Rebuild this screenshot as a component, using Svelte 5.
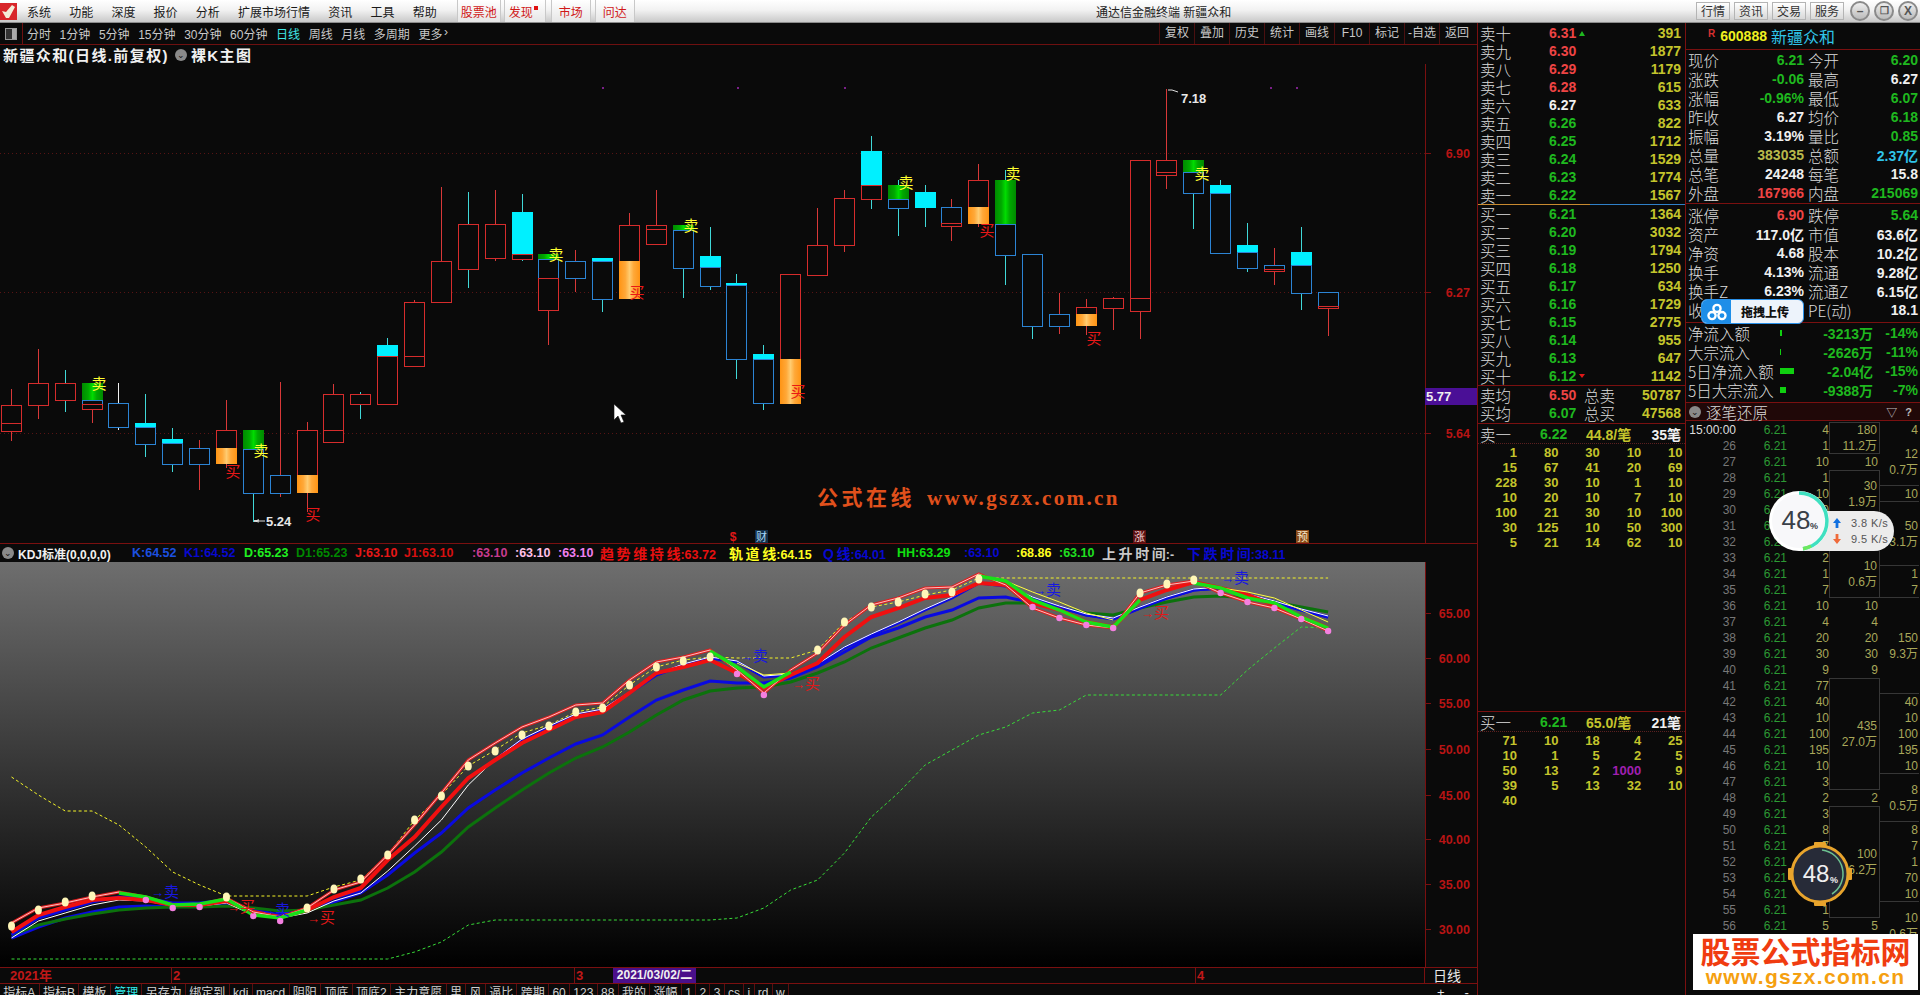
<script>
  const menus = ["系统", "功能", "深度", "报价", "分析", "扩展市场行情", "资讯", "工具", "帮助"];
  const periods = ["分时", "1分钟", "5分钟", "15分钟", "30分钟", "60分钟", "日线", "周线", "月线", "多周期", "更多"];
  const tools = ["复权", "叠加", "历史", "统计", "画线", "F10", "标记", "-自选", "返回"];

  // [wick top, wick bottom, wick colour, body segments [top, bottom, kind]]
  const candles = [
    [389, 441, "r", [[405, 423, "r"], [423, 431, "r"]]],
    [349, 419, "r", [[383, 405, "r"]]],
    [370, 412, "c", [[383, 400, "r"]]],
    [383, 423, "r", [[383, 400, "g"], [400, 404, "b"], [404, 409, "r"]]],
    [383, 430, "w", [[403, 427, "b"]]],
    [394, 457, "c", [[423, 427, "C"], [427, 444, "b"]]],
    [428, 472, "c", [[439, 443, "C"], [443, 464, "b"]]],
    [440, 490, "r", [[448, 464, "b"]]],
    [400, 468, "r", [[430, 448, "r"], [448, 464, "o"]]],
    [430, 522, "c", [[430, 449, "g"], [449, 493, "b"]]],
    [382, 497, "r", [[475, 493, "b"]]],
    [422, 512, "r", [[430, 475, "r"], [475, 493, "o"]]],
    [384, 443, "r", [[394, 430, "r"], [430, 442, "r"]]],
    [392, 419, "c", [[394, 404, "r"]]],
    [338, 404, "c", [[345, 356, "C"], [356, 404, "r"]]],
    [300, 366, "r", [[302, 356, "r"], [356, 366, "r"]]],
    [187, 302, "r", [[261, 302, "r"]]],
    [192, 288, "c", [[224, 269, "r"]]],
    [190, 261, "r", [[224, 258, "r"]]],
    [194, 261, "c", [[212, 254, "C"], [254, 259, "r"]]],
    [254, 345, "r", [[254, 259, "g"], [259, 278, "b"], [278, 310, "r"]]],
    [250, 292, "r", [[261, 278, "b"]]],
    [258, 312, "c", [[258, 261, "C"], [261, 299, "b"]]],
    [213, 299, "r", [[225, 261, "r"], [261, 299, "o"]]],
    [190, 245, "r", [[225, 229, "r"], [229, 244, "r"]]],
    [225, 298, "c", [[225, 230, "g"], [230, 268, "b"]]],
    [227, 290, "c", [[256, 267, "C"], [267, 286, "b"]]],
    [274, 379, "c", [[283, 285, "C"], [285, 359, "b"]]],
    [345, 410, "c", [[354, 359, "C"], [359, 403, "b"]]],
    [274, 404, "r", [[274, 359, "r"], [359, 404, "o"]]],
    [208, 275, "r", [[245, 275, "r"]]],
    [190, 252, "r", [[198, 245, "r"]]],
    [136, 209, "c", [[151, 185, "C"], [185, 199, "r"]]],
    [180, 236, "c", [[185, 199, "g"], [199, 208, "b"]]],
    [185, 227, "c", [[192, 208, "C"]]],
    [199, 241, "r", [[207, 223, "b"], [223, 226, "r"]]],
    [164, 227, "r", [[180, 207, "r"], [207, 224, "o"]]],
    [170, 285, "c", [[180, 224, "g"], [224, 255, "b"]]],
    [254, 339, "c", [[254, 326, "b"]]],
    [293, 334, "r", [[314, 326, "b"]]],
    [299, 335, "r", [[307, 314, "r"], [314, 326, "o"]]],
    [297, 330, "r", [[298, 308, "r"]]],
    [160, 339, "r", [[160, 298, "r"], [298, 311, "r"]]],
    [89, 189, "r", [[160, 172, "r"], [172, 175, "r"]]],
    [160, 229, "c", [[160, 172, "g"], [172, 193, "b"]]],
    [180, 253, "c", [[185, 193, "C"], [193, 253, "b"]]],
    [223, 272, "c", [[245, 252, "C"], [252, 268, "b"]]],
    [248, 285, "r", [[265, 269, "b"], [269, 271, "r"]]],
    [227, 310, "c", [[252, 265, "C"], [265, 293, "b"]]],
    [292, 336, "r", [[292, 306, "b"], [306, 308, "r"]]]
  ];
  const barX = (i) => Math.round(1 + 26.87 * i);
  const midX = (i) => 11.5 + 26.87 * i;
  const wickColor = { r: "#d83838", c: "#40d8d8", w: "#f0f0f0" };
  const strokeColor = { r: "#d62c2c", b: "#2c84d4" };

  const sellMarks = [[99, 383], [261, 450], [556, 254], [691, 225], [906, 182], [1013, 173], [1202, 173]];
  const buyMarks = [[233, 471], [313, 514], [637, 292], [798, 391], [987, 230], [1094, 338]];
  const purpleDots = [602, 737, 844, 1270, 1296];

  const darkGreen = [935, 925, 919, 914, 910, 908, 907, 907, 906, 908, 911, 910, 905, 900, 888, 872, 852, 827, 808, 790, 773, 758, 747, 732, 715, 700, 691, 688, 687, 682, 673, 662, 648, 638, 628, 620, 608, 603, 603, 608, 613, 615, 608, 602, 597, 596, 598, 602, 607, 612];
  const blueLow = [938, 927, 918, 912, 907, 906, 907, 905, 903, 910, 915, 910, 902, 893, 875, 853, 833, 808, 790, 773, 758, 744, 735, 717, 700, 690, 681, 683, 683, 678, 667, 652, 637, 628, 617, 610, 598, 597, 603, 607, 615, 619, 608, 598, 590, 588, 595, 602, 610, 617];
  const blueHigh = [935, 918, 910, 902, 897, 898, 903, 903, 900, 912, 915, 910, 898, 890, 868, 843, 817, 782, 760, 740, 727, 715, 710, 693, 675, 665, 658, 662, 677, 675, 665, 648, 635, 623, 610, 598, 583, 586, 598, 607, 615, 619, 608, 598, 590, 588, 595, 602, 610, 617];
  const redMain = [932, 915, 907, 900, 898, 900, 905, 905, 901, 912, 917, 910, 897, 888, 860, 837, 807, 778, 760, 743, 730, 717, 712, 693, 673, 667, 660, 673, 688, 675, 663, 637, 617, 608, 598, 595, 583, 585, 603, 610, 622, 627, 600, 590, 582, 588, 595, 605, 617, 628];
  const paleHigh = [923, 908, 903, 897, 892, 897, 905, 905, 898, 912, 917, 908, 890, 882, 855, 825, 793, 760, 743, 727, 717, 705, 703, 680, 662, 657, 650, 670, 693, 670, 653, 625, 605, 598, 588, 587, 574, 585, 608, 618, 625, 628, 593, 585, 581, 593, 602, 608, 619, 631];
  const yellowDash = [777, 795, 811, 811, 825, 847, 872, 885, 896, 896, 896, 896, 887, 880, 855, 820, 795, 766, 750, 733, 725, 712, 707, 685, 667, 660, 657, 658, 658, 658, 650, 622, 607, 602, 595, 590, 578, 578, 578, 578, 578, 578, 578, 578, 578, 578, 578, 578, 578, 578];
  const greenDash = [959, 959, 959, 959, 959, 959, 959, 959, 959, 959, 959, 959, 959, 959, 959, 952, 942, 925, 920, 920, 920, 920, 920, 920, 920, 920, 920, 918, 908, 890, 880, 853, 817, 793, 765, 750, 735, 727, 713, 710, 695, 695, 695, 695, 695, 695, 670, 648, 627, 628];
  const whiteLine = blueHigh.map((y, i) => (i <= 17 ? y + 3 : y - 1));
  const poly = (arr, from = 0, to = arr.length - 1) =>
    arr.slice(from, to + 1).map((y, k) => `${midX(from + k).toFixed(1)},${y}`).join(" ");

  // bright green overlay on the falling stretches: [first bar, values]
  const greenRuns = [
    [4, [893, 897, 905, 904, 899, 915, 918, 910]],
    [26, [651, 667, 687, 672]],
    [36, [576, 581, 600, 610, 622, 627, 600]],
    [44, [583, 588, 598, 603, 617, 628]]
  ];
  const yellowRuns = [
    [27, [663, 675, 673]],
    [37, [581, 592, 602, 613, 620]],
    [44, [583, 588, 592, 598, 610, 622]]
  ];
  const polyRun = (run) => run[1].map((y, k) => `${midX(run[0] + k).toFixed(1)},${y}`).join(" ");

  const creamDots = [[0, 926], [1, 910], [2, 902], [3, 896], [8, 897], [11, 908], [12, 889], [13, 879], [14, 855], [15, 820], [16, 796], [17, 766], [18, 751], [19, 735], [20, 726], [21, 712], [22, 708], [23, 685], [24, 667], [25, 661], [26, 657], [30, 650], [31, 622], [32, 607], [33, 602], [34, 594], [35, 592], [36, 579], [42, 593], [43, 584], [44, 580]];
  const pinkDots = [[5, 900], [6, 908], [7, 907], [9, 916], [10, 921], [27, 674], [28, 695], [38, 607], [39, 618], [40, 625], [41, 628], [45, 593], [46, 602], [47, 608], [48, 619], [49, 631]];
  const kdjArrows = [
    ["卖", 151, 892, "#1818e0"], ["卖", 262, 910, "#1818e0"], ["买", 227, 907, "#e01818"], ["买", 307, 918, "#e01818"],
    ["卖", 740, 656, "#1818e0"], ["买", 792, 684, "#e01818"], ["卖", 1033, 590, "#1818e0"], ["买", 1141, 613, "#e01818"], ["卖", 1221, 578, "#1818e0"]
  ];
  const kdjAxis = [["65.00", 613], ["60.00", 658], ["55.00", 703], ["50.00", 749], ["45.00", 795], ["40.00", 839], ["35.00", 884], ["30.00", 929]];

  // [label, value, colour, width]
  const kdjHead = [
    ["K", ":64.52", "#1c50e0", 52], ["K1", ":64.52", "#0808d0", 60], ["D", ":65.23", "#20f020", 52], ["D1", ":65.23", "#008800", 59], ["J", ":63.10", "#e81818", 49], ["J1", ":63.10", "#d81010", 68],
    ["", ":63.10", "#c83c90", 43], ["", ":63.10", "#ffc0e8", 43], ["", ":63.10", "#f080f0", 42], ["趋势维持线", ":63.72", "#e81010", 129], ["轨道线", ":64.15", "#ffff20", 94],
    ["Q线", ":64.01", "#0808d0", 74], ["HH", ":63.29", "#10e010", 67], ["", ":63.10", "#0808d0", 52], ["", ":68.86", "#ffff20", 43], ["", ":63.10", "#20e020", 43],
    ["上升时间", ":-", "#c8c8c8", 85], ["下跌时间", ":38.11", "#0808d0", 110]
  ];
  const hasCjk = (s) => /[^\x00-\x7f]/.test(s);

  const bottomTabs = ["指标A", "指标B", "模板", "管理", "另存为", "绑定到", "kdj", "macd", "阴阳", "顶底", "顶底2", "主力意愿", "里", "风", "逼比", "跨期", "60", "123", "88", "我的", "涨幅", "1", "2", "3", "cs", "i", "rd", "w"];

  const sellBook = [["卖十", "6.31", "391"], ["卖九", "6.30", "1877"], ["卖八", "6.29", "1179"], ["卖七", "6.28", "615"], ["卖六", "6.27", "633"], ["卖五", "6.26", "822"], ["卖四", "6.25", "1712"], ["卖三", "6.24", "1529"], ["卖二", "6.23", "1774"], ["卖一", "6.22", "1567"]];
  const buyBook = [["买一", "6.21", "1364"], ["买二", "6.20", "3032"], ["买三", "6.19", "1794"], ["买四", "6.18", "1250"], ["买五", "6.17", "634"], ["买六", "6.16", "1729"], ["买七", "6.15", "2775"], ["买八", "6.14", "955"], ["买九", "6.13", "647"], ["买十", "6.12", "1142"]];
  const priceClass = (p) => (p > 6.27 ? "red" : p < 6.27 ? "green" : "white");

  const sellQueue = [1, 80, 30, 10, 10, 15, 67, 41, 20, 69, 228, 30, 10, 1, 10, 10, 20, 10, 7, 10, 100, 21, 30, 10, 100, 30, 125, 10, 50, 300, 5, 21, 14, 62, 10];
  const buyQueue = [71, 10, 18, 4, 25, 10, 1, 5, 2, 5, 50, 13, 2, 1000, 9, 39, 5, 13, 32, 10, 40];

  const quoteA = [
    ["现价", "6.21", "green", "今开", "6.20", "green"], ["涨跌", "-0.06", "green", "最高", "6.27", "white"], ["涨幅", "-0.96%", "green", "最低", "6.07", "green"], ["昨收", "6.27", "white", "均价", "6.18", "green"],
    ["振幅", "3.19%", "white", "量比", "0.85", "green"], ["总量", "383035", "dimyellow", "总额", "2.37亿", "cyan"], ["总笔", "24248", "white", "每笔", "15.8", "white"], ["外盘", "167966", "red", "内盘", "215069", "green"]
  ];
  const quoteB = [
    ["涨停", "6.90", "red", "跌停", "5.64", "green"], ["资产", "117.0亿", "white", "市值", "63.6亿", "white"], ["净资", "4.68", "white", "股本", "10.2亿", "white"], ["换手", "4.13%", "white", "流通", "9.28亿", "white"],
    ["换手Z", "6.23%", "white", "流通Z", "6.15亿", "white"], ["收益", "0.09", "white", "PE(动)", "18.1", "white"]
  ];
  const flows = [["净流入额", 2, "-3213万", "-14%"], ["大宗流入", 1, "-2626万", "-11%"], ["5日净流入额", 14, "-2.04亿", "-15%"], ["5日大宗流入", 6, "-9388万", "-7%"]];

  const tickVols = [4, 1, 10, 1, 10, 20, 50, 10, 2, 1, 7, 10, 4, 20, 30, 9, 77, 40, 10, 100, 195, 10, 3, 2, 3, 8, 7, 1, 70, 10, 1, 5];
  // merged cells of the two right tick columns: [first row, rows, line 1, line 2]
  const tickC3 = [[0, 2, "180", "11.2万", 1], [2, 1, "10"], [3, 3, "30", "1.9万", 1], [8, 3, "10", "0.6万", 1], [11, 1, "10"], [12, 1, "4"], [13, 1, "20"], [14, 1, "30"], [15, 1, "9"], [16, 7, "435", "27.0万", 1], [23, 1, "2"], [24, 7, "100", "6.2万", 1], [31, 1, "5"]];
  const tickC4 = [[0, 1, "4"], [1, 3, "12", "0.7万", 1], [4, 1, "10", "", 1], [5, 4, "50", "3.1万", 1], [9, 1, "1"], [10, 1, "7", "", 1], [11, 6, "150", "9.3万", 1], [17, 1, "40"], [18, 1, "10"], [19, 1, "100"], [20, 1, "195"], [21, 1, "10", "", 1], [22, 3, "8", "0.5万", 1], [25, 1, "8"], [26, 1, "7"], [27, 1, "1"], [28, 1, "70"], [29, 1, "10", "", 1], [30, 3, "10", "0.6万"]];
</script>

<div class="screen">
  <header class="titlebar">
    <div class="bar-left">
      <svg class="logo" viewBox="0 0 17 17">
        <rect width="17" height="17" fill="#d8262a" />
        <polygon points="2,8 6,9 12,2 15,4 9,15 6,15" fill="#f4ecd8" />
      </svg>
      <nav class="menu">
        {#each menus as m}<span>{m}</span>{/each}
      </nav>
      <span class="hot first">股票池</span>
      <span class="hot dot">发现<i></i></span>
      <span class="hot">市场</span>
      <span class="hot last">问达</span>
    </div>
    <div class="win-title">通达信金融终端 新疆众和</div>
    <div class="win-btns">
      <span class="win-tab">行情</span><span class="win-tab">资讯</span><span class="win-tab">交易</span><span class="win-tab">服务</span>
      <span class="win-circle">–</span><span class="win-circle small">❐</span><span class="win-circle">X</span>
    </div>
  </header>

  <div class="main">
    <section class="charts">
      <div class="toolbar">
        <span class="panel-ico"><i></i></span>
        <div class="periods">
          {#each periods as p}<span class:on={p === "日线"}>{p}</span>{/each}
          <span class="chev">›</span>
        </div>
        <div class="tools">
          {#each tools as t}<span>{t}</span>{/each}
        </div>
      </div>

      <div class="chart-title">
        <b>新疆众和(日线.前复权)</b>
        <span class="round-ico">⌄</span>
        <b>裸K主图</b>
      </div>

      <svg class="price" viewBox="0 64 1477 479" width="1477" height="479">
        <defs>
          <linearGradient id="gr">
            <stop offset="0" stop-color="#008a00" /><stop offset="0.3" stop-color="#00a800" /><stop offset="0.5" stop-color="#00dc00" /><stop offset="0.7" stop-color="#00a800" /><stop offset="1" stop-color="#008a00" />
          </linearGradient>
          <linearGradient id="or">
            <stop offset="0" stop-color="#ff9414" /><stop offset="0.3" stop-color="#ffa838" /><stop offset="0.5" stop-color="#ffcb70" /><stop offset="0.7" stop-color="#ffa838" /><stop offset="1" stop-color="#ff9414" />
          </linearGradient>
        </defs>

        {#each [153, 292, 433] as y}
          <line x1="0" x2="1432" y1={y + 0.5} y2={y + 0.5} stroke="#571414" stroke-dasharray="1 3" />
        {/each}
        {#each purpleDots as x}<rect x={x} y="87" width="2" height="2" fill="#7a2088" />{/each}

        <g shape-rendering="crispEdges">
          {#each candles as c, i}
            <line x1={barX(i) + 10.5} x2={barX(i) + 10.5} y1={c[0]} y2={c[1]} stroke={wickColor[c[2]]} />
            {#each c[3] as s}
              {#if s[2] === "C"}
                <rect x={barX(i)} y={s[0]} width="21" height={s[1] - s[0]} fill="#00f0ff" />
              {:else if s[2] === "g"}
                <rect x={barX(i)} y={s[0]} width="21" height={s[1] - s[0]} fill="url(#gr)" />
              {:else if s[2] === "o"}
                <rect x={barX(i)} y={s[0]} width="21" height={s[1] - s[0]} fill="url(#or)" />
              {:else}
                <rect x={barX(i) + 0.5} y={s[0] + 0.5} width="20" height={s[1] - s[0]} fill="#0a0a0a" stroke={strokeColor[s[2]]} />
              {/if}
            {/each}
          {/each}
        </g>

        {#each sellMarks as m}<text class="mark" x={m[0]} y={m[1] + 6} fill="#ffff30" text-anchor="middle">卖</text>{/each}
        {#each buyMarks as m}<text class="mark" x={m[0]} y={m[1] + 6} fill="#e81818" text-anchor="middle">买</text>{/each}

        <polyline points="1168,90 1172,90 1178,92" fill="none" stroke="#ddd" />
        <text class="extreme" x="1181" y="103">7.18</text>
        <polyline points="259,522 254,521 259,520 254,521 265,521" fill="none" stroke="#ddd" />
        <text class="extreme" x="266" y="526">5.24</text>

        <text class="site" x="817" y="505">公式在线</text>
        <text class="site wide" x="927" y="505">www.gszx.com.cn</text>

        <text class="event bold" x="733" y="541" fill="#e01818" text-anchor="middle">$</text>
        <rect x="755" y="530" width="13" height="13" fill="#12304a" /><text class="event" x="761.5" y="541" fill="#a8d8f8" text-anchor="middle">财</text>
        <rect x="1133" y="530" width="13" height="13" fill="#5a1010" /><text class="event" x="1139.5" y="541" fill="#f0d0d0" text-anchor="middle">涨</text>
        <rect x="1296" y="530" width="13" height="13" fill="#8a4a18" /><text class="event" x="1302.5" y="541" fill="#f8e8c8" text-anchor="middle">预</text>

        <polygon points="614,404 614,420 618,416 621,423 624,422 621,415 626,415" fill="#fff" stroke="#111" stroke-width="0.6" />

        <polygon points="1395,51 1399,55 1395,59 1391,55" fill="none" stroke="#777" />
        <rect x="1411.5" y="50.5" width="8" height="9" fill="#222" stroke="#888" /><rect x="1415" y="52" width="3" height="6" fill="#aaa" />

        <line x1="1425.5" x2="1425.5" y1="64" y2="543" stroke="#7a1010" />
        {#each [["6.90", 153], ["6.27", 292], ["5.64", 433]] as a}
          <line x1="1425" x2="1431" y1={a[1] + 0.5} y2={a[1] + 0.5} stroke="#7a1010" />
          <text class="axis" x="1470" y={a[1] + 5} text-anchor="end">{a[0]}</text>
        {/each}
        <rect x="1425" y="388" width="52" height="17" fill="#4a0f96" />
        <text class="axis-now" x="1426" y="401">5.77</text>
      </svg>

      <div class="kdj-head">
        <span class="round-ico">⌄</span>
        <b class="kdj-name">KDJ标准(0,0,0,0)</b>
        {#each kdjHead as h}
          <b class="kdj-val" style="color:{h[2]};width:{h[3]}px"><span class:kdj-cn={hasCjk(h[0])}>{h[0]}</span>{h[1]}</b>
        {/each}
      </div>

      <svg class="kdj" viewBox="0 562 1477 405" width="1477" height="405">
        <defs>
          <linearGradient id="fade" x1="0" x2="0" y1="0" y2="1">
            <stop offset="0" stop-color="#6e6e6e" /><stop offset="1" stop-color="#000" />
          </linearGradient>
        </defs>
        <rect x="0" y="562" width="1425" height="405" fill="url(#fade)" />
        <polyline points={poly(yellowDash)} fill="none" stroke="#f4f428" stroke-dasharray="3 2.5" />
        <polyline points={poly(greenDash)} fill="none" stroke="#38dc38" stroke-dasharray="3 2.5" />
        <polyline points={poly(blueLow)} fill="none" stroke="#0a0ae0" stroke-width="3" />
        <polyline points={poly(darkGreen)} fill="none" stroke="#0c720c" stroke-width="3" />
        <polyline points={poly(blueHigh, 0, 13)} fill="none" stroke="#0a0ae0" stroke-width="3" />
        <polyline points={poly(blueHigh, 18, 49)} fill="none" stroke="#0a0ae0" stroke-width="3" />
        <polyline points={poly(whiteLine)} fill="none" stroke="#fff" />
        <polyline points={poly(redMain)} fill="none" stroke="#f01010" stroke-width="4" />
        <polyline points={poly(paleHigh)} fill="none" stroke="#e02020" stroke-width="3" />
        <polyline points={poly(paleHigh)} fill="none" stroke="#ffc0c0" />
        {#each yellowRuns as run}
          <polyline points={polyRun(run)} fill="none" stroke="#ffff40" />
        {/each}
        {#each greenRuns as run}
          <polyline points={polyRun(run)} fill="none" stroke="#18e018" stroke-width="3.5" />
        {/each}
        {#each creamDots as d}<ellipse cx={midX(d[0])} cy={d[1]} rx="3.5" ry="4.5" fill="#fff6b8" />{/each}
        {#each pinkDots as d}<circle cx={midX(d[0])} cy={d[1]} r="3.2" fill="#f480e0" />{/each}
        {#each kdjArrows as a}
          <text class="arrow" x={a[1]} y={a[2] + 5} fill={a[3]}>→<tspan class="arrow-cjk">{a[0]}</tspan></text>
        {/each}
        <line x1="1425.5" x2="1425.5" y1="562" y2="967" stroke="#7a1010" />
        {#each kdjAxis as a}
          <line x1="1425" x2="1431" y1={a[1] + 0.5} y2={a[1] + 0.5} stroke="#7a1010" />
          <text class="axis" x="1470" y={a[1] + 5} text-anchor="end">{a[0]}</text>
        {/each}
      </svg>

      <div class="dates">
        <div class="date-track">
          <span class="d-year">2021年</span>
          <span class="d-mark m2">2</span>
          <span class="d-mark m3">3</span>
          <span class="d-now">2021/03/02/二</span>
          <span class="d-mark m4">4</span>
        </div>
        <span class="d-period">日线</span>
      </div>
      <div class="tabs">
        <div class="tab-list">
          {#each bottomTabs as t}<span class:on={t === "管理"}>{t}</span>{/each}
        </div>
        <span class="zoom-btns"><span>+</span><span>-</span></span>
      </div>
    </section>

    <section class="book">
      <div class="book-rows">
        {#each sellBook as r}
          <div class="book-row">
            <span class="cn">{r[0]}</span>
            <b class="px {priceClass(+r[1])}">{r[1]}{#if r[0] === "卖十"}<i class="tri up"></i>{/if}</b>
            <b class="qty">{r[2]}</b>
          </div>
        {/each}
      </div>
      <div class="split"></div>
      <div class="book-rows">
        {#each buyBook as r}
          <div class="book-row">
            <span class="cn">{r[0]}</span>
            <b class="px green">{r[1]}{#if r[0] === "买十"}<i class="tri down"></i>{/if}</b>
            <b class="qty">{r[2]}</b>
          </div>
        {/each}
      </div>
      <div class="avg">
        <div class="book-row"><span class="cn">卖均</span><b class="px red">6.50</b><span class="cn tot">总卖</span><b class="qty">50787</b></div>
        <div class="book-row"><span class="cn">买均</span><b class="px green">6.07</b><span class="cn tot">总买</span><b class="qty">47568</b></div>
      </div>

      <div class="queue sell">
        <div class="queue-head"><span class="cn">卖一</span><b class="qh-px green">6.22</b><b class="qh-avg">44.8/笔</b><b class="qh-num">35笔</b></div>
        <div class="queue-grid">
          {#each sellQueue as q}<b>{q}</b>{/each}
        </div>
      </div>
      <div class="queue">
        <div class="queue-head"><span class="cn">买一</span><b class="qh-px green">6.21</b><b class="qh-avg">65.0/笔</b><b class="qh-num">21笔</b></div>
        <div class="queue-grid">
          {#each buyQueue as q}<b class:big={q === 1000}>{q}</b>{/each}
        </div>
      </div>
    </section>

    <section class="quote">
      <div class="quote-head"><b class="r">R</b><b class="code">600888</b><span class="name">新疆众和</span></div>
      <div class="q-block a">
        {#each quoteA as r}
          <div class="q-row">
            <span class="cn">{r[0]}</span><b class={r[2]}>{r[1]}</b>
            <span class="cn">{r[3]}</span><b class={r[5]}>{r[4]}</b>
          </div>
        {/each}
      </div>
      <div class="q-block b">
        {#each quoteB as r}
          <div class="q-row">
            <span class="cn">{r[0]}</span><b class={r[2]}>{r[1]}</b>
            <span class="cn">{r[3]}</span><b class={r[5]}>{r[4]}</b>
          </div>
        {/each}
      </div>
      <div class="q-block c">
        {#each flows as f}
          <div class="flow-row">
            <span class="cn">{f[0]}</span>
            <span class="flow-bar"><i style="width:{f[1]}px"></i></span>
            <b class="green flow-v">{f[2]}</b>
            <b class="green flow-p">{f[3]}</b>
          </div>
        {/each}
      </div>
      <div class="tick-head">
        <span class="round-ico">⌄</span><span class="cn">逐笔还原</span>
        <span class="tick-ico">▽</span><span class="tick-ico">?</span>
      </div>
      <div class="ticks">
        <span class="t-time first" style="grid-row:1">15:00:00</span>
        <span class="t-px" style="grid-row:1">6.21</span>
        {#each tickVols as v, i}
          {#if i > 0}
            <span class="t-time" style="grid-row:{i + 1}">{25 + i}</span>
            <span class="t-px" style="grid-row:{i + 1}">6.21</span>
          {/if}
          <span class="t-vol" style="grid-row:{i + 1}">{v}</span>
        {/each}
        {#each tickC3 as c}
          <div class="t-cell c3" class:boxed={c[4]} style="grid-row:{c[0] + 1} / span {c[1]}"><span>{c[2]}</span>{#if c[3]}<span>{c[3]}</span>{/if}</div>
        {/each}
        {#each tickC4 as c}
          <div class="t-cell c4" class:boxed={c[4]} style="grid-row:{c[0] + 1} / span {c[1]}"><span>{c[2]}</span>{#if c[3]}<span>{c[3]}</span>{/if}</div>
        {/each}
      </div>
    </section>
  </div>

  <!-- floating things on top of the terminal -->
  <div class="upload">
    <span class="upload-ico">
      <svg viewBox="0 0 24 20" width="22" height="18">
        <circle cx="12" cy="6" r="4" fill="none" stroke="#fff" stroke-width="2.6" />
        <circle cx="6.5" cy="14" r="4" fill="none" stroke="#fff" stroke-width="2.6" />
        <circle cx="17.5" cy="14" r="4" fill="none" stroke="#fff" stroke-width="2.6" />
      </svg>
    </span>
    <b>拖拽上传</b>
  </div>

  <div class="speed">
    <div class="speed-pill">
      <div class="speed-line">
        <svg viewBox="0 0 8 10" width="8" height="10"><path d="M4 0 L8 5 H5.4 V10 H2.6 V5 H0 Z" fill="#1070e0" /></svg>
        3.8 K/s
      </div>
      <div class="speed-line">
        <svg viewBox="0 0 8 10" width="8" height="10"><path d="M4 10 L8 5 H5.4 V0 H2.6 V5 H0 Z" fill="#ef6a3a" /></svg>
        9.5 K/s
      </div>
    </div>
    <svg class="speed-ring" viewBox="0 0 60 60" width="60" height="60">
      <circle cx="30" cy="30" r="30" fill="#fff" />
      <circle cx="30" cy="30" r="27" fill="#f8f8fa" />
      <path d="M30 2 A28 28 0 0 1 34 57.7" fill="none" stroke="#3fe0c0" stroke-width="3.5" />
      <path d="M42 55 A28 28 0 0 1 34 57.7" fill="none" stroke="#6ee860" stroke-width="3.5" />
      <text x="27" y="38" text-anchor="middle" class="ring-num">48</text>
      <text x="45" y="38" text-anchor="middle" class="ring-pct">%</text>
    </svg>
  </div>

  <svg class="orb" viewBox="0 0 64 64" width="64" height="64">
    <circle cx="32" cy="32" r="28" fill="#272b38" stroke="#e8a42c" stroke-width="3" />
    <rect x="26" y="0" width="12" height="4" rx="1" fill="#e8a42c" />
    <rect x="26" y="60" width="12" height="4" rx="1" fill="#e8a42c" />
    <rect x="0" y="26" width="4" height="12" rx="1" fill="#e8a42c" />
    <rect x="60" y="26" width="4" height="12" rx="1" fill="#e8a42c" />
    <path d="M34 8 A24 24 0 0 1 44 52" fill="none" stroke="#6cc090" stroke-width="1.5" />
    <text x="28" y="40" text-anchor="middle" class="orb-num">48</text>
    <text x="46" y="41" text-anchor="middle" class="orb-pct">%</text>
  </svg>

  <div class="site-badge">
    <b class="badge-cn">股票公式指标网</b>
    <b class="badge-en">www.gszx.com.cn</b>
  </div>
</div>

<style>
  :global(body) {
    margin: 0;
    background: #0a0a0a;
  }

  .screen {
    position: relative;
    width: 1920px;
    height: 995px;
    overflow: hidden;
    background: #0a0a0a;
    color: #e6e6e6;
    font-family: "Liberation Sans", "Noto Sans CJK SC", sans-serif;
    font-size: 12px;
    display: flex;
    flex-direction: column;
  }

  /* title bar */
  .titlebar {
    height: 23px;
    flex: none;
    display: flex;
    align-items: center;
    background: linear-gradient(#ffffff, #f2f2f2 45%, #c9c9c9);
    color: #1a1a1a;
    box-sizing: border-box;
    border-bottom: 1px solid #8c8c8c;
  }

  .bar-left {
    width: 1096px;
    flex: none;
    display: flex;
    align-items: center;
    height: 100%;
  }

  .logo {
    width: 17px;
    height: 17px;
    flex: none;
  }

  .menu {
    display: flex;
    gap: 18.2px;
    margin-left: 10px;
    white-space: nowrap;
  }

  .hot {
    color: #d01818;
    height: 100%;
    display: flex;
    align-items: center;
    padding: 0 7px;
    background: linear-gradient(#fff, #e6e6e6);
    border-left: 1px solid #c8c8c8;
    border-right: 1px solid #c8c8c8;
    margin-left: 5px;
    position: relative;
  }

  .hot.first {
    margin-left: 20px;
    padding: 0 3px;
  }

  .hot.dot {
    padding: 0 12px 0 4px;
    margin-left: 3px;
  }

  .hot.last {
    margin-left: 4px;
  }

  .hot.dot i {
    position: absolute;
    right: 7px;
    top: 6px;
    width: 4px;
    height: 4px;
    background: #e01010;
  }

  .win-title {
    flex: 1;
    white-space: nowrap;
    color: #222;
  }

  .win-btns {
    display: flex;
    align-items: center;
    gap: 2px;
    padding-right: 2px;
  }

  .win-tab {
    width: 34px;
    height: 18px;
    line-height: 18px;
    text-align: center;
    color: #333;
    border: 1px solid #b4b4b4;
    box-sizing: border-box;
    background: linear-gradient(#fff, #d8d8d8);
    margin-right: 2px;
  }

  .win-circle {
    width: 20px;
    height: 20px;
    border-radius: 50%;
    box-sizing: border-box;
    border: 2px solid #8a8a8a;
    background: linear-gradient(#eee, #bbb);
    color: #555;
    font-weight: bold;
    font-size: 12px;
    line-height: 16px;
    text-align: center;
    margin-left: 2px;
  }

  .win-circle.small {
    font-size: 10px;
  }

  .main {
    flex: 1;
    display: flex;
    min-height: 0;
  }

  /* left: charts */
  .charts {
    width: 1477px;
    flex: none;
    display: flex;
    flex-direction: column;
  }

  .toolbar {
    height: 22px;
    flex: none;
    display: flex;
    align-items: center;
    box-sizing: border-box;
    border-bottom: 1px solid #6e1010;
    background: #0a0a0a;
  }

  .panel-ico {
    width: 23px;
    height: 100%;
    flex: none;
    border-right: 1px solid #6e1010;
    display: flex;
    align-items: center;
    justify-content: center;
    box-sizing: border-box;
  }

  .panel-ico i {
    width: 10px;
    height: 10px;
    background: linear-gradient(90deg, #333 60%, #aaa 60%);
    border: 1px solid #999;
  }

  .periods {
    display: flex;
    gap: 8.6px;
    margin-left: 4px;
    color: #c8c8c8;
    white-space: nowrap;
  }

  .periods .on {
    color: #40e8e8;
  }

  .chev {
    margin-left: -7px;
  }

  .tools {
    margin-left: auto;
    display: flex;
    height: 100%;
    align-items: center;
    color: #c8c8c8;
    white-space: nowrap;
    padding-right: 3px;
  }

  .tools span {
    width: 35px;
    text-align: center;
    border-left: 1px solid #4a1010;
    line-height: 21px;
    box-sizing: border-box;
  }

  .chart-title {
    height: 19px;
    flex: none;
    display: flex;
    align-items: center;
    padding-left: 3px;
    color: #f0f0f0;
    font-size: 15px;
    letter-spacing: 1.4px;
    white-space: nowrap;
  }

  .round-ico {
    display: inline-flex;
    align-items: center;
    justify-content: center;
    width: 12px;
    height: 12px;
    border-radius: 50%;
    background: #8a8a8a;
    color: #111;
    font-size: 9px;
    line-height: 8px;
    margin: 0 4px 0 6px;
    flex: none;
    letter-spacing: 0;
  }

  .price,
  .kdj {
    display: block;
    flex: none;
  }

  .mark {
    font: 15px "Noto Sans CJK SC", sans-serif;
  }

  .extreme {
    font: bold 13px "Liberation Sans", sans-serif;
    fill: #e8e8e8;
  }

  .site {
    font: bold 21px "Noto Sans CJK SC", sans-serif;
    fill: #e0501c;
    letter-spacing: 3.5px;
  }

  .site.wide {
    font: bold 21px "Liberation Serif", "Noto Sans CJK SC", serif;
    letter-spacing: 2.4px;
  }

  .event {
    font: 11px "Noto Sans CJK SC", sans-serif;
  }

  .event.bold {
    font: bold 12px "Liberation Sans", sans-serif;
  }

  .axis {
    font: bold 12.5px "Liberation Sans", sans-serif;
    fill: #b81414;
  }

  .axis-now {
    font: bold 13px "Liberation Sans", sans-serif;
    fill: #f0f0f0;
  }

  .arrow {
    font: 13px "Liberation Sans", "Noto Sans CJK SC", sans-serif;
  }

  .arrow-cjk {
    font: 15px "Noto Sans CJK SC", sans-serif;
  }

  .kdj-head {
    height: 19px;
    flex: none;
    box-sizing: border-box;
    border-top: 1px solid #7a1010;
    display: flex;
    align-items: center;
    white-space: nowrap;
    font-size: 13px;
  }

  .kdj-head .round-ico {
    margin: 0 4px 0 2px;
  }

  .kdj-name {
    width: 114px;
    flex: none;
    color: #f0f0f0;
    font-size: 12px;
  }

  .kdj-val {
    flex: none;
    font-size: 12.5px;
  }

  .kdj-cn {
    font-size: 14px;
    letter-spacing: 2.6px;
    margin-right: -2.6px;
  }

  .dates {
    height: 17px;
    flex: none;
    box-sizing: border-box;
    border-top: 1px solid #7a1010;
    border-bottom: 1px solid #7a1010;
    display: flex;
  }

  .date-track {
    width: 1425px;
    flex: none;
    position: relative;
    font-size: 13px;
    font-weight: bold;
    color: #c01818;
    line-height: 15px;
    border-right: 1px solid #7a1010;
    box-sizing: border-box;
  }

  .d-year {
    position: absolute;
    left: 10px;
  }

  .d-mark {
    position: absolute;
    border-left: 1px solid #7a1010;
    padding-left: 1px;
  }

  .m2 {
    left: 171px;
  }

  .m3 {
    left: 574px;
  }

  .m4 {
    left: 1195px;
  }

  .d-now {
    position: absolute;
    left: 613px;
    width: 83px;
    text-align: center;
    background: #4a0f8a;
    color: #f0f0f0;
    white-space: nowrap;
    overflow: hidden;
    font-size: 12px;
  }

  .d-period {
    margin-left: 8px;
    color: #e8e8e8;
    line-height: 16px;
    font-size: 14px;
  }

  .tabs {
    flex: 1;
    min-height: 0;
    display: flex;
    overflow: hidden;
  }

  .tab-list {
    display: flex;
    width: 1425px;
    flex: none;
    line-height: 18px;
    color: #d0d0d0;
    white-space: nowrap;
  }

  .tab-list span {
    padding: 0 3.3px;
    border-right: 1px solid #5a1010;
  }

  .tab-list .on {
    color: #30e8e8;
  }

  .zoom-btns {
    display: flex;
    gap: 20px;
    margin-left: 12px;
    line-height: 18px;
    font-size: 13px;
  }

  /* cjk labels used by both right panels */
  .cn {
    font-family: "Noto Sans CJK SC", sans-serif;
    font-size: 15.5px;
    font-weight: 300;
    color: #dcdcdc;
    line-height: 16px;
    white-space: nowrap;
  }

  .red {
    color: #ee4444;
  }

  .green {
    color: #1fb81f;
  }

  .white {
    color: #f0f0f0;
  }

  .cyan {
    color: #30c4e8;
  }

  .dimyellow {
    color: #b8b84a;
  }

  /* order book */
  .book {
    width: 209px;
    flex: none;
    box-sizing: border-box;
    border-left: 1px solid #7a1010;
    border-right: 1px solid #7a1010;
    display: flex;
    flex-direction: column;
    font-size: 14px;
    padding-top: 1px;
  }

  .book-row {
    height: 18px;
    display: flex;
    align-items: center;
    padding: 0 4px 0 2px;
    position: relative;
  }

  .px {
    position: absolute;
    left: 71px;
    display: flex;
    align-items: center;
  }

  .qty {
    margin-left: auto;
    color: #c4c42c;
  }

  .tot {
    position: absolute;
    left: 106px;
  }

  .tri {
    margin-left: 3px;
    width: 0;
    height: 0;
    border-left: 3px solid transparent;
    border-right: 3px solid transparent;
  }

  .tri.up {
    border-bottom: 5px solid #1fb81f;
  }

  .tri.down {
    border-top: 4px solid #e01818;
  }

  .split {
    height: 1px;
    background: linear-gradient(90deg, #c88a30 54%, #2f80c8 54%);
  }

  .avg {
    border-top: 1px solid #7a1010;
    flex: none;
  }

  .queue {
    display: flex;
    flex-direction: column;
  }

  .queue.sell {
    height: 289px;
    box-sizing: border-box;
    border-top: 1px solid #7a1010;
    border-bottom: 1px solid #7a1010;
    margin-top: 1px;
  }

  .queue-head {
    height: 19px;
    flex: none;
    display: flex;
    align-items: center;
    padding: 0 4px 0 2px;
    position: relative;
    border-bottom: 1px dotted #5a2020;
    white-space: nowrap;
  }

  .qh-px {
    position: absolute;
    left: 62px;
  }

  .qh-avg {
    position: absolute;
    left: 108px;
    color: #c4c42c;
    font-family: "Liberation Sans", "Noto Sans CJK SC", sans-serif;
  }

  .qh-num {
    margin-left: auto;
    color: #f0f0f0;
  }

  .queue-grid {
    display: grid;
    grid-template-columns: 39px repeat(4, 41.4px);
    grid-auto-rows: 15px;
    padding-top: 1px;
    font-size: 13px;
    color: #c4c42c;
    line-height: 15px;
    text-align: right;
  }

  .queue-grid .big {
    color: #a020b0;
  }

  /* quote panel */
  .quote {
    flex: 1;
    min-width: 0;
    display: flex;
    flex-direction: column;
    font-size: 14px;
    overflow: hidden;
  }

  .quote-head {
    height: 27px;
    flex: none;
    box-sizing: border-box;
    border-bottom: 1px solid #7a1010;
    display: flex;
    align-items: center;
    padding-left: 22px;
  }

  .r {
    font-size: 10px;
    color: #d83030;
    margin-top: -6px;
  }

  .code {
    color: #f0f020;
    margin-left: 5px;
  }

  .name {
    font: 16px "Noto Sans CJK SC", sans-serif;
    color: #30c4e8;
    margin-left: 4px;
  }

  .q-block {
    box-sizing: border-box;
    border-bottom: 1px solid #7a1010;
    flex: none;
  }

  .q-block.a {
    height: 154px;
  }

  .q-block.b {
    height: 119px;
    padding-top: 1px;
  }

  .q-block.c {
    height: 80px;
  }

  .q-row {
    height: 19px;
    display: grid;
    grid-template-columns: 38px 78px 38px 1fr;
    align-items: center;
    padding: 0 2px 0 2px;
    text-align: right;
    white-space: nowrap;
  }

  .q-row .cn {
    text-align: left;
  }

  .q-row .cn:nth-child(3) {
    padding-left: 4px;
  }

  .flow-row {
    height: 19px;
    display: grid;
    grid-template-columns: 92px 30px 63px 1fr;
    align-items: center;
    padding: 0 2px;
    white-space: nowrap;
  }

  .flow-bar i {
    display: block;
    height: 6px;
    background: #10d010;
  }

  .flow-v,
  .flow-p {
    text-align: right;
  }

  .tick-head {
    height: 17px;
    flex: none;
    display: flex;
    align-items: center;
    background: #200808;
    border-bottom: 1px solid #7a1010;
  }

  .tick-head .round-ico {
    margin: 0 5px 0 3px;
  }

  .tick-ico {
    color: #bbb;
    font-size: 11px;
    font-weight: bold;
    margin-right: 8px;
  }

  .tick-ico:nth-of-type(3) {
    margin-left: auto;
  }

  .ticks {
    display: grid;
    grid-template-columns: 50px 51px 42px 51px 39px;
    grid-auto-rows: 16px;
    font-size: 12px;
    line-height: 16px;
    text-align: right;
    white-space: nowrap;
    color: #a9a85a;
    padding-top: 1px;
  }

  .t-time {
    grid-column: 1;
    color: #777;
  }

  .t-time.first {
    color: #ddd;
    letter-spacing: 0;
  }

  .t-px {
    grid-column: 2;
    color: #2c9a34;
  }

  .t-vol {
    grid-column: 3;
  }

  .t-cell {
    display: flex;
    flex-direction: column;
    justify-content: center;
    align-items: flex-end;
    box-sizing: border-box;
    padding-right: 2px;
    gap: 0;
  }

  .t-cell.c3 {
    grid-column: 4;
  }

  .t-cell.c4 {
    grid-column: 5;
    padding-right: 1px;
  }

  .t-cell.c3.boxed {
    border: 1px solid #363636;
  }

  .t-cell.c4.boxed {
    border-bottom: 1px solid #363636;
  }

  /* overlays */
  .upload {
    position: absolute;
    left: 1701px;
    top: 299px;
    width: 103px;
    height: 25px;
    display: flex;
    border-radius: 6px;
    overflow: hidden;
    background: #edf3fb;
    box-sizing: border-box;
    border: 1px solid #2a90e8;
    color: #111;
    font: bold 12px "Noto Sans CJK SC", sans-serif;
    align-items: center;
  }

  .upload-ico {
    width: 29px;
    height: 100%;
    background: #1e8ee8;
    display: flex;
    align-items: center;
    justify-content: center;
    margin-right: 10px;
  }

  .speed {
    position: absolute;
    left: 1769px;
    top: 491px;
    width: 125px;
    height: 60px;
  }

  .speed-ring {
    position: absolute;
    left: 0;
    top: 0;
  }

  .ring-num {
    font: 26px "Liberation Sans", sans-serif;
    fill: #3a4048;
  }

  .ring-pct {
    font: bold 9px "Liberation Sans", sans-serif;
    fill: #3a4048;
  }

  .speed-pill {
    position: absolute;
    left: 30px;
    right: 0;
    top: 20px;
    height: 40px;
    border-radius: 0 20px 20px 0;
    background: #ececec;
    color: #555;
    font-size: 11px;
    padding-left: 34px;
    box-sizing: border-box;
    display: flex;
    flex-direction: column;
    justify-content: center;
    gap: 2px;
    letter-spacing: 0.4px;
  }

  .speed-line {
    display: flex;
    align-items: center;
    gap: 10px;
    height: 14px;
    white-space: nowrap;
  }

  .orb {
    position: absolute;
    left: 1788px;
    top: 842px;
  }

  .orb-num {
    font: 24px "Liberation Sans", sans-serif;
    fill: #f0f0f0;
  }

  .orb-pct {
    font: bold 9px "Liberation Sans", sans-serif;
    fill: #f0f0f0;
  }

  .site-badge {
    position: absolute;
    left: 1693px;
    top: 934px;
    width: 225px;
    height: 56px;
    background: #fff;
    display: flex;
    flex-direction: column;
    align-items: center;
  }

  .badge-cn {
    font: bold 30px/32px "Noto Sans CJK SC", sans-serif;
    color: #f03c10;
    white-space: nowrap;
  }

  .badge-en {
    font: bold 21px/22px "Liberation Sans", sans-serif;
    color: #f5a010;
    letter-spacing: 1.3px;
    white-space: nowrap;
  }
</style>
